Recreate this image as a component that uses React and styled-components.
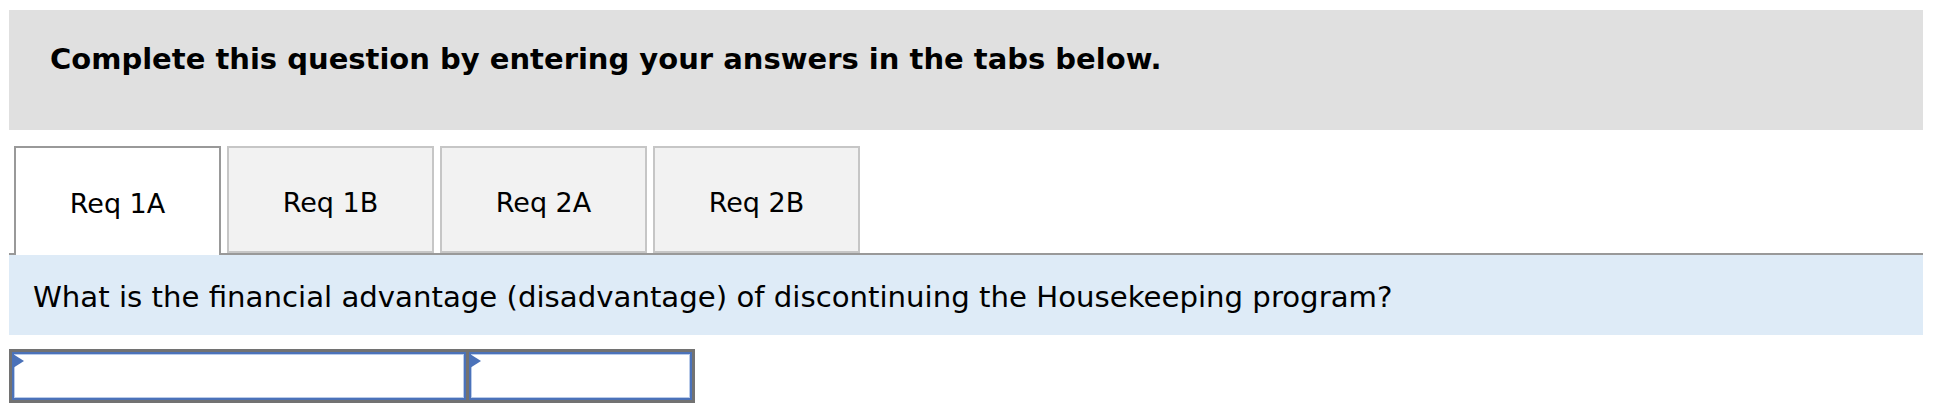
import React from "react";
import styled, { createGlobalStyle } from "styled-components";

const Global = createGlobalStyle`
  html, body { margin: 0; padding: 0; background: #ffffff; }
  body { font-family: "DejaVu Sans", Verdana, sans-serif; color: #000; }
`;

const Page = styled.div`
  padding: 10px 21px 0 9px;
`;

const Header = styled.div`
  background: #e0e0e0;
  height: 120px;
  box-sizing: border-box;
  padding: 32px 0 0 41px;
`;

const Title = styled.h2`
  margin: 0;
  font-size: 29px;
  font-weight: bold;
  line-height: normal;
`;

const TabBar = styled.div`
  display: flex;
  gap: 6px;
  margin-top: 16px;
  padding-left: 5px;
  border-bottom: 2px solid #999999;
  height: 107px;
`;

const Tab = styled.div`
  width: 207px;
  box-sizing: border-box;
  height: ${(p) => (p.$active ? "109px" : "107px")};
  margin-bottom: ${(p) => (p.$active ? "-2px" : "0")};
  background: ${(p) => (p.$active ? "#ffffff" : "#f2f2f2")};
  border: 2px solid ${(p) => (p.$active ? "#999999" : "#c6c6c6")};
  border-bottom: ${(p) => (p.$active ? "none" : "2px solid #c6c6c6")};
  display: flex;
  align-items: center;
  justify-content: center;
  font-size: 27px;
  padding-top: ${(p) => (p.$active ? "3px" : "5px")};
`;

const Question = styled.div`
  background: #deebf7;
  height: 80px;
  box-sizing: border-box;
  padding: 25px 0 0 24px;
  font-size: 29.2px;
  line-height: normal;
`;

const InputTable = styled.div`
  display: inline-flex;
  margin-top: 14px;
  background: #727272;
  padding: 3px;
  gap: 3px;
`;

const Cell = styled.div`
  position: relative;
  width: ${(p) => p.$w}px;
  height: 48px;
  box-sizing: border-box;
  background: #ffffff;
  border: 2px solid #4b72b9;
  box-shadow: inset 0 0 0 1px #b9cbe9;

  &::before {
    content: "";
    position: absolute;
    top: 0;
    left: -1px;
    width: 0;
    height: 0;
    border-left: 11px solid #4b72b9;
    border-top: 7px solid transparent;
    border-bottom: 7px solid transparent;
  }
`;

const tabs = ["Req 1A", "Req 1B", "Req 2A", "Req 2B"];

export default function App() {
  return (
    <Page>
      <Global />
      <Header>
        <Title>Complete this question by entering your answers in the tabs below.</Title>
      </Header>
      <TabBar>
        {tabs.map((t, i) => (
          <Tab key={t} $active={i === 0}>
            {t}
          </Tab>
        ))}
      </TabBar>
      <Question>
        What is the financial advantage (disadvantage) of discontinuing the Housekeeping program?
      </Question>
      <InputTable>
        <Cell $w={454} />
        <Cell $w={223} />
      </InputTable>
    </Page>
  );
}
